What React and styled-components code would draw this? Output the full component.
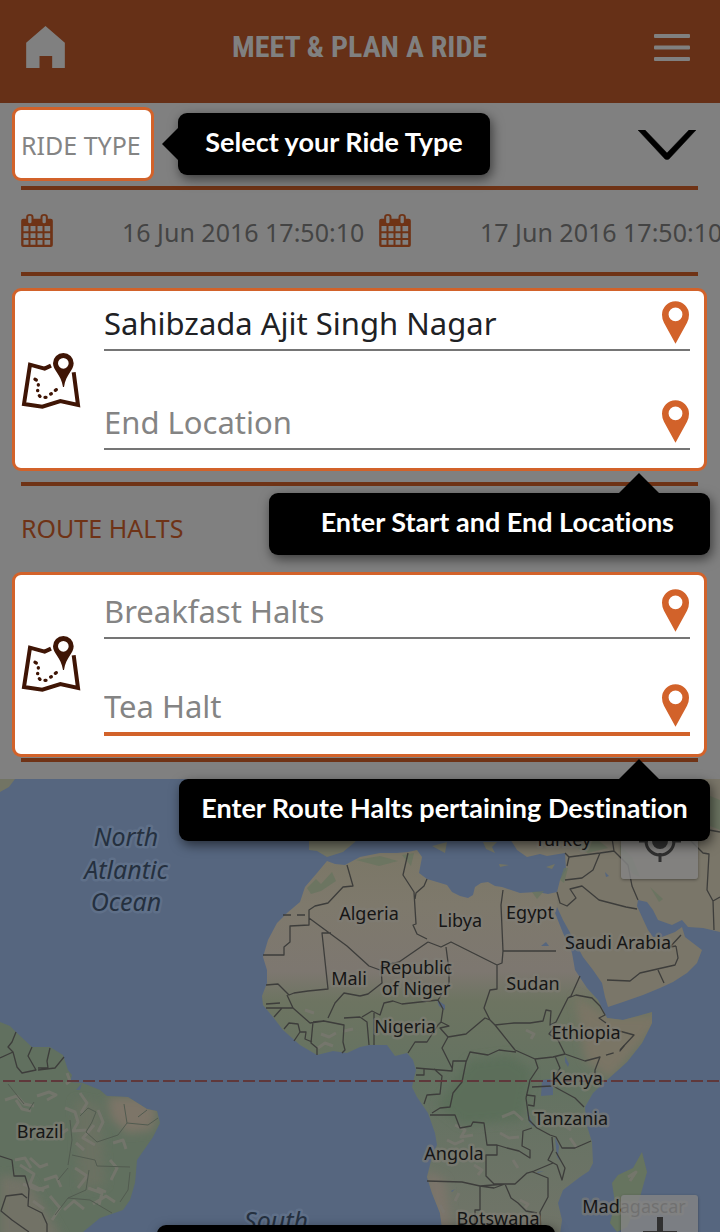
import React from "react";
import styled, { createGlobalStyle, css } from "styled-components";

const color = {
  headerBg: "#663017",
  headerInk: "#808080",
  page: "#808080",
  rule: "#6f3316",
  accent: "#d2622a",
  ink: "#202124",
  hint: "#848484",
  muted: "#444444",
  brown: "#3f1505",
  water: "#56667f",
};

const GlobalStyle = createGlobalStyle`
  *, *::before, *::after { box-sizing: border-box; }
  body {
    margin: 0;
    background: ${color.page};
    font-family: "Noto Sans", "Open Sans", sans-serif;
  }
  button, input, select { font: inherit; color: inherit; margin: 0; border-radius: 0; outline: none; }
  svg { display: block; flex: none; }
`;

const Page = styled.div`
  display: flex;
  flex-direction: column;
  min-height: 100vh;
  overflow: hidden;
`;

const Header = styled.header`
  display: flex;
  align-items: center;
  justify-content: space-between;
  height: 103px;
  padding: 0 30px 9px 26px;
  background: ${color.headerBg};
  color: ${color.headerInk};
`;

const Title = styled.h1`
  margin: 0;
  font: 700 30px/36px "Roboto Condensed", "Liberation Sans Narrow", "Liberation Sans", sans-serif;
`;

const IconButton = styled.button`
  display: block;
  padding: 0;
  border: 0;
  background: none;
  cursor: pointer;
`;

const Section = styled.section`
  margin: 0 22px 0 21px;
  border-bottom: 4px solid ${color.rule};
`;

const RideTypeRow = styled.div`
  display: flex;
  align-items: flex-start;
  justify-content: space-between;
  height: 83px;
  padding: 4px 2px 0 0;
`;

const RideTypeSpot = styled.label`
  position: relative;
  margin-left: -9px;
`;

const RideTypeSelect = styled.select`
  appearance: none;
  display: block;
  width: 142px;
  height: 74px;
  padding: 2px 0 0 6px;
  border: 3px solid ${color.accent};
  border-radius: 9px;
  background: #fff;
  color: ${color.hint};
  font-size: 25px;
`;

const ChevronButton = styled(IconButton)`
  padding-top: 23px;
`;

const DateRow = styled.div`
  display: flex;
  align-items: center;
  height: 82px;
  padding-bottom: 2px;
`;

const DateField = styled.label`
  display: flex;
  flex: none;
  align-items: center;
  gap: 69px;
  color: ${color.muted};
`;

const DateInput = styled.input`
  width: 257px;
  height: 36px;
  padding: 4px 0 0;
  border: 0;
  background: none;
  font-size: 25px;
`;

const SpotCard = styled.div`
  position: relative;
  display: flex;
  align-items: center;
  gap: 23px;
  margin: 12px -9px 11px;
  padding: ${(p) => (p.$roomy ? "4px" : "0")} 14px 18px 6px;
  border: 3px solid ${color.accent};
  border-radius: 9px;
  background: #fff;
`;

const HaltsCard = styled(SpotCard)`
  margin: 0 -9px 1px;
`;

const MapMark = styled.span`
  padding-top: ${(p) => (p.$raised ? "12px" : "20px")};
`;

const Fields = styled.div`
  display: flex;
  flex: 1;
  flex-direction: column;
  gap: ${(p) => (p.$tight ? "35px" : "39px")};
`;

const Field = styled.div`
  display: flex;
  align-items: flex-end;
  border-bottom: ${(p) => (p.$active ? `4px solid ${color.accent}` : "2px solid #757575")};
`;

const FieldInput = styled.input`
  flex: 1;
  min-width: 0;
  height: 58px;
  padding: 6px 0 0;
  border: 0;
  background: none;
  color: ${color.ink};
  font-size: 31px;
  &::placeholder { color: ${color.hint}; opacity: 1; }
`;

const PinButton = styled(IconButton)`
  padding: 0 1px 5px 0;
`;

const HaltsTitle = styled.h2`
  margin: 0;
  padding: 24px 0 26px;
  color: ${color.rule};
  font-size: 25px;
  font-weight: 400;
  line-height: 36px;
`;

const Tip = styled.div`
  position: absolute;
  z-index: 3;
  display: flex;
  align-items: center;
  justify-content: center;
  width: ${(p) => p.$width}px;
  height: 62px;
  padding-bottom: 4px;
  border-radius: 9px;
  background: #000;
  box-shadow: 2px 4px 12px rgba(0, 0, 0, 0.55);
  color: #fff;
  font: 700 27px/32px Lato, sans-serif;
  font-variant-ligatures: none;
  white-space: nowrap;

  &::before {
    content: "";
    position: absolute;
    border: 20px solid transparent;
  }

  ${(p) =>
    p.$side === "right" &&
    css`
      left: calc(100% + 24px);
      top: 6px;
      &::before {
        right: 100%;
        top: 15px;
        border-width: 16px 16px 16px 0;
        border-right-color: #000;
      }
    `}
  ${(p) =>
    p.$side === "below" &&
    css`
      top: calc(100% + 25px);
      right: -6px;
      &::before {
        right: 51px;
        bottom: 100%;
        border-width: 0 20px 20px;
        border-bottom-color: #000;
      }
    `}
  ${(p) =>
    p.$side === "map" &&
    css`
      left: 157px;
      top: 446px;
    `}
`;

const WideTip = styled(Tip)`
  justify-content: flex-end;
  padding-right: 36px;
`;

const MapArea = styled.main`
  position: relative;
  flex: 1;
  min-height: 453px;
  margin-top: 17px;
  overflow: hidden;
  background: ${color.water};
`;

const MapDrawing = styled.svg`
  position: absolute;
  inset: 0;
  width: 100%;
  height: 100%;
`;

const MapControl = styled.button`
  position: absolute;
  right: 22px;
  top: ${(p) => p.$top}px;
  display: grid;
  place-items: center;
  width: 77px;
  height: 77px;
  padding: 0;
  border: 0;
  border-radius: 3px;
  background: rgba(132, 132, 132, 0.82);
  box-shadow: 0 1px 3px rgba(0, 0, 0, 0.35);
  color: #303030;
`;

const HomeIcon = () => (
  <svg width="39" height="42" viewBox="78 78 116 126" aria-hidden="true">
    <path fill="currentColor" d="M136 78l58 50v76h-38v-36h-38v36H78v-76z" />
  </svg>
);

const MenuIcon = () => (
  <svg width="36" height="27" viewBox="0 0 36 27" aria-hidden="true">
    <g fill="currentColor">
      <rect width="36" height="4" rx="1" />
      <rect y="11.5" width="36" height="4" rx="1" />
      <rect y="23" width="36" height="4" rx="1" />
    </g>
  </svg>
);

const ChevronIcon = () => (
  <svg width="58" height="30" viewBox="0 0 58 30" aria-hidden="true">
    <path d="M0 0h7l22 23L51 0h7L31 29q-2 1-4 0z" fill="#000" stroke="#000" strokeWidth="0.5" />
  </svg>
);

const CalendarIcon = () => (
  <svg width="32" height="33" viewBox="63 72 95 99" aria-hidden="true">
    <path
      fill={color.rule}
      fillRule="evenodd"
      d="M69 86h9v-5q0-9 11-9t11 9v5h21v-5q0-9 11-9t11 9v5h9q6 0 6 6v73q0 6-6 6H69q-6 0-6-6V92q0-6 6-6zM70 108v16h15v-16zm21 0v16h15v-16zm21 0v16h15v-16zm21 0v16h17v-16zM70 130v14h15v-14zm21 0v14h15v-14zm21 0v14h15v-14zm21 0v14h17v-14zM70 150v14h15v-14zm21 0v14h15v-14zm21 0v14h15v-14zm21 0v14h17v-14zM84 81v15q0 4 5 4t5-4V81q0-4-5-4t-5 4zm43 0v15q0 4 5 4t5-4V81q0-4-5-4t-5 4z"
    />
  </svg>
);

const PinIcon = () => (
  <svg width="27" height="43" viewBox="0 0 82 129" aria-hidden="true">
    <path
      fill={color.accent}
      fillRule="evenodd"
      d="M41 0a41 41 0 0 1 41 41q0 13-6 24L41 129 6 65Q0 54 0 41A41 41 0 0 1 41 0zm0 19a21 21 0 1 0 0 42 21 21 0 0 0 0-42z"
    />
  </svg>
);

const RouteMapIcon = () => (
  <svg width="60" height="56" viewBox="62 225 180 168" aria-hidden="true">
    <path
      d="M152 263l-19 9-44-12-18 118 55 8 54-17 53 12-13-98"
      fill="none"
      stroke={color.brown}
      strokeWidth="12"
    />
    <path
      fill={color.brown}
      fillRule="evenodd"
      d="M189 225a31 31 0 0 1 31 31c0 22-23 32-29 71h-3c-6-39-30-49-30-71a31 31 0 0 1 31-31zm0 15a16 16 0 1 0 0 32 16 16 0 0 0 0-32z"
    />
    <g stroke={color.brown} strokeWidth="10" strokeLinecap="round">
      <path d="M104 304l4 2M114 320v1M112 337v1M117 353l2 2M134 358h3M151 348l2-1M165 337l3-2" />
    </g>
  </svg>
);

const TargetIcon = () => (
  <svg width="42" height="42" viewBox="0 0 42 42" aria-hidden="true">
    <g fill="none" stroke="currentColor" strokeWidth="3">
      <circle cx="21" cy="21" r="14" />
      <path d="M21 0v9M21 33v9M0 21h9M33 21h9" />
    </g>
    <circle cx="21" cy="21" r="8" fill="currentColor" />
  </svg>
);

const PlusIcon = () => (
  <svg width="34" height="34" viewBox="0 0 34 34" aria-hidden="true">
    <path d="M17 0v34M0 17h34" stroke="currentColor" strokeWidth="6" />
  </svg>
);

const AFRICA =
  "M327 861L335 864 345 865 360 857 380 853 397 853 408 852 417 850 422 857 419 873 427 879 447 885 452 892 460 896 468 898 473 895 475 887 481 883 488 882 495 886 502 887 520 893 537 892 548 894 557 892 557 907 555 913 563 933 572 953 575 970 587 988 598 1000 607 1018 623 1020 638 1016 652 1012 652 1023 642 1043 627 1062 607 1080 593 1093 585 1107 586 1123 592 1142 593 1163 589 1171 580 1177 563 1190 558 1203 562 1220 560 1234 443 1234 440 1213 432 1193 427 1177 433 1153 437 1145 435 1133 428 1113 417 1097 412 1087 416 1070 413 1060 407 1053 395 1056 387 1045 370 1045 360 1047 347 1053 333 1051 317 1055 300 1045 283 1030 273 1017 263 1005 262 996 267 983 267 970 263 957 268 940 277 923 287 913 300 902 305 887 317 873z";
const ASIA =
  "M557 907L557 892 560 880 566 870 565 853 547 856 540 854 527 857 517 850 512 842 504 830 500 779 720 779 720 932 703 928 688 927 682 920 672 925 658 920 653 910 647 902 638 900 637 906 642 917 648 930 653 937 662 937 675 932 682 927 685 937 702 950 697 963 687 973 673 982 660 988 643 995 623 1002 608 1007 605 997 602 983 593 970 583 957 573 938 563 920z";
const AMERICA =
  "M0 1022L10 1026 17 1033 32 1047 50 1047 63 1055 68 1070 72 1075 70 1082 83 1083 100 1090 107 1096 128 1097 147 1109 157 1111 160 1123 153 1137 137 1160 136 1172 135 1183 130 1200 123 1210 100 1218 83 1232 0 1232z";
const MADAGASCAR =
  "M642 1152L647 1172 640 1197 627 1227 617 1232 610 1223 615 1203 612 1183 618 1175 633 1168z";

const BORDERS =
  "M347 865L353 886 343 887 328 903 315 906 309 910 309 925 290 926 290 942 284 947 284 955 263 955 " +
  "M309 918L347 946 369 966 380 970 M331 933L322 933 328 989 308 991 294 993 289 995 278 984 266 985 " +
  "M408 853L403 875 414 892 416 924 413 925 417 934 427 939 M427 879L424 886 416 893 415 899 " +
  "M428 942L441 947 451 942 497 965 M428 942L399 962 381 966 382 983 368 994 360 996 " +
  "M446 947L449 970 449 983 438 1000 " +
  "M503 890L501 905 503 951 556 951 M503 951L502 963 497 965 497 989 490 990 484 1008 490 1020 " +
  "M360 996L344 993 335 1003 328 1018 M324 1021L310 1023 293 1008 287 995 M293 1008L266 1008 M266 1004L280 1003 M274 1017L282 1008 M284 1029L289 1023 298 1024 300 1032 306 1032 305 1039 312 1042 M294 1041L300 1032 M313 1022L311 1043 317 1048 317 1055 M313 1022L324 1021 344 1025 343 1042 345 1050 342 1053 M344 1018L360 1017 M360 1017L367 1022 369 1045 M362 1017L372 1011 380 1015 384 1003 393 1001 402 1004 438 1000 M374 1013L374 1045 " +
  "M438 1000L443 1009 441 1022 449 1026 440 1028 448 1037 442 1048 452 1068 M408 1053L415 1042 427 1042 438 1025 441 1022 " +
  "M448 1037L466 1034 485 1018 490 1020 495 1025 514 1023 530 1023 543 1021 546 1010 551 1011 550 1025 556 1022 568 998 571 996 580 976 " +
  "M495 1025L515 1050 535 1059 553 1057 565 1054 558 1040 549 1034 555 1026 M568 998L576 995 592 998 600 1006 605 1015 599 1018 606 1023 M612 1029L634 1035 620 1050 " +
  "M565 1054L585 1061 600 1057 595 1070 595 1083 M535 1059L538 1068 530 1080 526 1098 M555 1056L560 1068 554 1079 553 1086 575 1098 584 1107 " +
  "M516 1052L499 1050 488 1055 470 1052 466 1062 462 1082 453 1093 450 1107 440 1108 432 1113 M466 1061L453 1061 452 1071 416 1068 M416 1075L424 1075 424 1069 M434 1069L442 1076 440 1094 427 1095 424 1104 " +
  "M430 1115L455 1115 460 1128 471 1126 473 1122 484 1123 487 1145 497 1145 507 1148 519 1151 530 1158 530 1150 522 1146 523 1131 532 1128 M497 1145L497 1155 486 1155 486 1176 494 1184 515 1184 527 1173 534 1171 553 1163 M427 1181L462 1182 480 1186 506 1184 M480 1186L480 1210 475 1210 475 1234 M480 1186L494 1188 505 1184 511 1198 518 1203 526 1211 537 1213 M533 1172L548 1178 548 1197 540 1212 541 1234 " +
  "M526 1098L529 1120 537 1128 550 1135 556 1137 562 1148 575 1148 591 1141 M526 1095L535 1096 534 1106 528 1105 M532 1087L552 1086 M552 1137L553 1150 548 1160 557 1165 562 1180 565 1168 556 1152 " +
  "M557 892L560 903 567 906 576 898 570 889 582 886 599 900 626 907 637 909 M565 880L582 878 593 870 600 853 614 851 628 865 632 886 638 900 M614 851L612 838 M567 866L569 857 565 853 M569 857L600 853 " +
  "M676 946L678 958 675 965 640 973 630 981 607 980 M658 970L664 983 M676 946L670 947 681 935 M690 840L703 853 709 854 707 890 713 901 714 930 M713 901L720 897 M709 830L720 832 " +
  "M16 1032L12 1042 8 1047 13 1052 17 1067 22 1073 36 1070 28 1056 32 1047 M50 1048L47 1061 48 1068 38 1068 M64 1057L55 1068 38 1070 M0 1058L13 1052 " +
  "M0 1156L12 1160 14 1176 25 1176 29 1189 28 1206 42 1213 47 1224 47 1232 M29 1232L12 1220 1 1211 6 1196 22 1194 27 1198";

const STATES =
  "M8 1084L24 1104M34 1102L29 1110M80 1116L88 1108 96 1112 92 1122 86 1132 97 1142 118 1135 127 1123 124 1104M127 1123L148 1125 158 1118M138 1117L147 1110M68 1165L72 1140 70 1120M72 1155L95 1160 97 1166 130 1167M58 1180L68 1168M89 1170L86 1190 68 1198 55 1215M68 1198L90 1200 112 1213M130 1172L128 1190 120 1202";

const MOTTLE =
  "M5 1100l12-4 7 8 10 2M37 1096l12-4 7 3-9 5M20 1165l14 9-4 10 14 7M30 1158l10 9 8-3M44 1180l12-4 5 11M65 1108l10 4 3 10-5 9 13-1M80 1093l7 10-6 10M98 1110l5 12-5 10M94 1125l-11 13 12 7M50 1196l10 12-8 12M75 1168l12 8-9 12M88 1188l14 5-3 12M110 1160l7 8-6 12M113 1143l10-3 3 9M15 1160l10-2 6 10M23 1184l15 6 11-4M64 1210l10-9 10 8M93 1204l13-8 9 6M76 1143l8 7M59 1135l9-6M97 1188l9 4M33 1201l11 8M16 1100l6 9 9 2M67 1073l3 8-4 3" +
  "M455 1125l10 5-4 7 12-2M500 1133l9 5 10-1M502 1117l12-5 9 8M474 1165l8 5-4 5M520 1200l8 4-3 4M526 1030l8 4-3 5M321 1034l8 3 7-4M318 1048l7-5 8 3M570 1138l7 10M440 1205l4 8M447 1140l8 4 9-4M628 1177l8-5-6 9M562 1124l9 6M450 1158l7 3M513 1160l5 8M459 1193l-4 8M305 1010l9 3M344 1031l9-2";

const GREENERY =
  "M307 888l9-9 5 5 11-12 4 9-15 10-10 3zM320 863l6 3M356 860l24-4 18 5-19 5zM402 855l12-2-3 13zM532 892l12-1-7 8zM560 880l4-12 4 0-4 15zM572 846l26-6 10 8-20 5zM620 845l12 12 8 20-7-3-12-16zM650 887l13 12-4 3zM670 780l50 20v30l-30-12z";

const LABELS = [
  [369, 920, "Algeria"],
  [460, 927, "Libya"],
  [530, 919, "Egypt"],
  [618, 949, "Saudi Arabia"],
  [349, 985, "Mali"],
  [416, 974, "Republic"],
  [416, 995, "of Niger"],
  [533, 990, "Sudan"],
  [405, 1033, "Nigeria"],
  [586, 1039, "Ethiopia"],
  [577, 1085, "Kenya"],
  [571, 1125, "Tanzania"],
  [454, 1160, "Angola"],
  [40, 1138, "Brazil"],
  [498, 1225, "Botswana"],
  [634, 1213, "Madagascar"],
  [563, 846, "Turkey"],
];

const OCEANS = [
  [126, 846, "North"],
  [126, 879, "Atlantic"],
  [126, 911, "Ocean"],
  [276, 1230, "South"],
];

const MapLabel = styled.text`
  font: 18px "Noto Sans", sans-serif;
  text-anchor: middle;
  fill: #161616;
  stroke: rgba(128, 126, 118, 0.6);
  stroke-width: 5px;
  stroke-linejoin: round;
  paint-order: stroke;
`;

const OceanLabel = styled(MapLabel)`
  font-size: 25px;
  font-style: italic;
  fill: #25303f;
  stroke: rgba(102, 119, 145, 0.6);
`;

function WorldMap() {
  return (
    <MapDrawing viewBox="0 779 720 453" preserveAspectRatio="xMidYMin slice" role="img" aria-label="Map of Africa and the Atlantic">
      <defs>
        <linearGradient id="climate" gradientUnits="userSpaceOnUse" x1="400" y1="860" x2="400" y2="1232">
          <stop offset="0" stopColor="#7b7767" />
          <stop offset="0.12" stopColor="#7e796c" />
          <stop offset="0.3" stopColor="#7d7770" />
          <stop offset="0.38" stopColor="#6d7461" />
          <stop offset="0.6" stopColor="#637261" />
          <stop offset="0.8" stopColor="#6a7365" />
          <stop offset="1" stopColor="#707468" />
        </linearGradient>
        <clipPath id="africa"><path d={AFRICA} /></clipPath>
        <clipPath id="america"><path d={AMERICA} /></clipPath>
        <filter id="soften"><feGaussianBlur stdDeviation="5" /></filter>
      </defs>
      <path d={AFRICA} fill="url(#climate)" />
      <g clipPath="url(#africa)">
        <g filter="url(#soften)">
          <path d="M470 1060l40-5 22 15-10 50-60 5-25-20z" fill="#5c6e5a" />
          <path d="M575 995l30 20h60l-55 65-25-20z" fill="#7a7565" />
          <path d="M425 1170l20 10 8 60h-20z" fill="#7c746a" />
        </g>
      </g>
      <path d={ASIA} fill="#7a7669" />
      <path d={AMERICA} fill="#61705f" />
      <g clipPath="url(#america)">
        <g filter="url(#soften)">
          <path d="M108 1097h35l14 13-5 20-25 3-16-15z" fill="#7d7568" />
          <path d="M0 1175l28 5 35 60H0z" fill="#727266" />
          <path d="M75 1100l25 5 5 80-25 5z" fill="#6b7162" />
        </g>
      </g>
      <path d={MADAGASCAR} fill="#66745f" />
      <path
        fill="#727464"
        d="M309 779v71l8 1 10 6 16-5 12-10 10-20v-43zM432 846l15-4-2 11zM483 842h14l-5 5 3 6-9-4zM499 864l10 1-9 2zM546 867l9-3-3 5zM0 779h15l-6 8-9 5z"
      />
      <path d={GREENERY} fill="#67745f" opacity="0.75" />
      <path d={MOTTLE} fill="none" stroke="#7a7770" strokeWidth="3" strokeLinejoin="round" opacity="0.7" />
      <path
        fill={color.water}
        d="M542 1080l11-1v16l-12 1zM565 1056l4 8-1 3-3-5zM437 1000l8 5v5l-6-4zM527 1110l7 17-5-5zM555 1137l4 9-1 10 4 7-5-6-1-10zM546 942l3 4h-8zM76 1090l6-7-2 7zM605 872l4 4-3 1zM451 1191l4-2-3 3zM537 1172l7-1-6 2z"
      />
      <path d={STATES} fill="none" stroke="#525b50" strokeWidth="1" />
      <path d={BORDERS} fill="none" stroke="#3d3d3b" strokeWidth="1.3" strokeLinejoin="round" />
      <path d="M283 915h26M606 1055l14-4 8-10" fill="none" stroke="#3d3d3b" strokeWidth="1.3" strokeDasharray="8 6" />
      <path d="M3 1081H720" stroke="#5f383b" strokeWidth="2" strokeDasharray="12 4" />
      {LABELS.map(([x, y, name]) => (
        <MapLabel key={name} x={x} y={y}>{name}</MapLabel>
      ))}
      {OCEANS.map(([x, y, name]) => (
        <OceanLabel key={name} x={x} y={y}>{name}</OceanLabel>
      ))}
    </MapDrawing>
  );
}

function PlaceField({ label, value, active }) {
  return (
    <Field $active={active}>
      <FieldInput type="text" aria-label={label} placeholder={label} defaultValue={value} />
      <PinButton type="button" aria-label={`Pick ${label} on the map`}>
        <PinIcon />
      </PinButton>
    </Field>
  );
}

function DateEntry({ label, value }) {
  return (
    <DateField>
      <CalendarIcon />
      <DateInput type="text" aria-label={label} defaultValue={value} />
    </DateField>
  );
}

export default function App() {
  return (
    <Page>
      <GlobalStyle />
      <Header>
        <IconButton type="button" aria-label="Home"><HomeIcon /></IconButton>
        <Title>MEET &amp; PLAN A RIDE</Title>
        <IconButton type="button" aria-label="Menu"><MenuIcon /></IconButton>
      </Header>

      <Section>
        <RideTypeRow>
          <RideTypeSpot>
            <RideTypeSelect aria-label="Ride type" defaultValue="">
              <option value="">RIDE TYPE</option>
            </RideTypeSelect>
            <Tip $side="right" $width={312}>Select your Ride Type</Tip>
          </RideTypeSpot>
          <ChevronButton type="button" aria-label="Show ride types"><ChevronIcon /></ChevronButton>
        </RideTypeRow>
      </Section>

      <Section>
        <DateRow>
          <DateEntry label="Start date" value="16 Jun 2016 17:50:10" />
          <DateEntry label="End date" value="17 Jun 2016 17:50:10" />
        </DateRow>
      </Section>

      <Section>
        <SpotCard>
          <MapMark><RouteMapIcon /></MapMark>
          <Fields>
            <PlaceField label="Start Location" value="Sahibzada Ajit Singh Nagar" />
            <PlaceField label="End Location" />
          </Fields>
          <WideTip $side="below" $width={441}>Enter Start and End Locations</WideTip>
        </SpotCard>
      </Section>

      <Section>
        <HaltsTitle>ROUTE HALTS</HaltsTitle>
        <HaltsCard $roomy>
          <MapMark $raised><RouteMapIcon /></MapMark>
          <Fields $tight>
            <PlaceField label="Breakfast Halts" />
            <PlaceField label="Tea Halt" active />
          </Fields>
          <Tip $side="below" $width={531}>Enter Route Halts pertaining Destination</Tip>
        </HaltsCard>
      </Section>

      <MapArea>
        <WorldMap />
        <MapControl type="button" aria-label="My location" $top={23}><TargetIcon /></MapControl>
        <MapControl type="button" aria-label="Zoom in" $top={416}><PlusIcon /></MapControl>
        <Tip as="aside" $side="map" $width={398} />
      </MapArea>
    </Page>
  );
}
